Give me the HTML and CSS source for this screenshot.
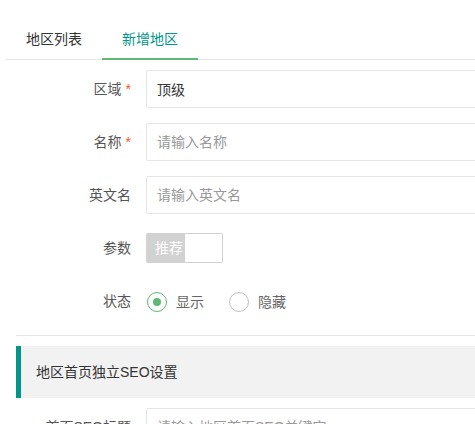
FILE: index.html
```html
<!DOCTYPE html>
<html lang="zh-CN">
<head>
  <meta charset="UTF-8">
  <meta name="viewport" content="width=device-width, initial-scale=1.0">
  <title>新增地区</title>
  <link rel="stylesheet" href="styles.css">
</head>
<body>
  <div class="page">
    <div class="tab">
      <ul class="tab-title">
        <li>地区列表</li>
        <li class="this">新增地区</li>
      </ul>

      <div class="tab-content">
        <form class="form">
          <div class="form-item">
            <label class="form-label">区域<span class="required">*</span></label>
            <div class="input-block">
              <input type="text" class="input" value="顶级">
            </div>
          </div>

          <div class="form-item">
            <label class="form-label">名称<span class="required">*</span></label>
            <div class="input-block">
              <input type="text" class="input" placeholder="请输入名称">
            </div>
          </div>

          <div class="form-item">
            <label class="form-label">英文名</label>
            <div class="input-block">
              <input type="text" class="input" placeholder="请输入英文名">
            </div>
          </div>

          <div class="form-item">
            <label class="form-label">参数</label>
            <div class="input-block">
              <div class="checkbox">
                <span>推荐</span><i></i>
              </div>
            </div>
          </div>

          <div class="form-item">
            <label class="form-label">状态</label>
            <div class="input-block">
              <div class="radio checked"><i></i><span>显示</span></div>
              <div class="radio"><i></i><span>隐藏</span></div>
            </div>
          </div>

          <hr class="line">

          <blockquote class="quote">地区首页独立SEO设置</blockquote>

          <div class="form-item">
            <label class="form-label">首页SEO标题</label>
            <div class="input-block">
              <input type="text" class="input" placeholder="请输入地区首页SEO关键字">
            </div>
          </div>
        </form>
      </div>
    </div>
  </div>
</body>
</html>
```

FILE: styles.css
```css
html, body {
  margin: 0;
  overflow: hidden;
}
body {
  font-family: "Liberation Sans", "Noto Sans CJK SC", sans-serif;
  font-size: 14px;
  color: #555;
  background: #fff;
}
.page {
  width: 760px;
  padding: 9px 0 0 6px;
}

/* tabs */
.tab {
  margin: 10px 0;
}
.tab-title {
  display: flex;
  margin: 0;
  padding: 0;
  list-style: none;
  height: 40px;
  border-bottom: 1px solid #e6e6e6;
}
.tab-title li {
  position: relative;
  padding: 0 20px;
  line-height: 40px;
  color: #333;
  cursor: pointer;
}
.tab-title li.this {
  color: #009688;
}
.tab-title li.this:after {
  content: "";
  position: absolute;
  left: 0;
  right: 0;
  bottom: -1px;
  height: 2px;
  background: #5FB878;
}
.tab-content {
  padding: 10px;
}

/* form */
.form-item {
  display: flex;
  margin-bottom: 15px;
}
.form-label {
  width: 130px;
  flex: none;
  box-sizing: border-box;
  padding: 9px 15px;
  line-height: 20px;
  text-align: right;
}
.required {
  margin-left: 4px;
  color: #ff5722;
  font-family: "Liberation Sans", sans-serif;
}
.input-block {
  flex: 1;
  display: flex;
  align-items: flex-start;
}
.input {
  width: 100%;
  height: 38px;
  box-sizing: border-box;
  padding: 0 10px;
  border: 1px solid #e6e6e6;
  border-radius: 2px;
  font: inherit;
  color: #333;
  outline: none;
}
.input::placeholder {
  color: #999;
}

/* checkbox with text block */
.checkbox {
  display: flex;
  height: 30px;
  margin-top: 4px;
  cursor: pointer;
}
.checkbox span {
  padding: 0 2px 0 9px;
  line-height: 30px;
  background: #d2d2d2;
  color: #fff;
  border-radius: 2px 0 0 2px;
}
.checkbox i {
  width: 38px;
  box-sizing: border-box;
  border: 1px solid #d2d2d2;
  border-left: none;
  border-radius: 0 2px 2px 0;
}

/* radios */
.radio {
  display: flex;
  align-items: center;
  margin: 6px 24px 0 0;
  line-height: 28px;
  color: #666;
  cursor: pointer;
}
.radio i {
  position: relative;
  width: 20px;
  height: 20px;
  box-sizing: border-box;
  margin: 0 9px 0 1px;
  border: 1.5px solid #c2c2c2;
  border-radius: 50%;
}
.radio.checked i {
  border-color: #5FB878;
}
.radio.checked i:after {
  content: "";
  position: absolute;
  left: 50%;
  top: 50%;
  width: 8px;
  height: 8px;
  margin: -4px 0 0 -4px;
  border-radius: 50%;
  background: #5FB878;
}

.line {
  height: 0;
  margin: 0 0 10px;
  border: none;
  border-top: 1px solid #e6e6e6;
}
.quote {
  margin: 0 0 10px;
  padding: 15px;
  line-height: 22px;
  border-left: 5px solid #009688;
  border-radius: 0 2px 2px 0;
  background: #f2f2f2;
  color: #333;
}
```
